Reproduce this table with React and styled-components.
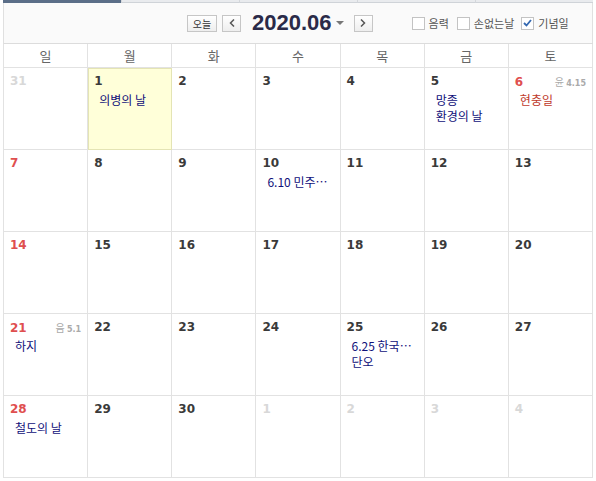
import React from "react";
import styled, { createGlobalStyle } from "styled-components";

const Global = createGlobalStyle`
  html, body {
    margin: 0;
    padding: 0;
    background: #fff;
  }
  body {
    font-family: "Noto Sans CJK KR", "DejaVu Sans", sans-serif;
  }
`;

const Frame = styled.div`
  width: 590px;
  margin: 0 3px;
`;

const Tabs = styled.div`
  display: grid;
  grid-template-columns: repeat(5, 1fr);
  height: 3px;
`;

const Tab = styled.div`
  background: ${p => (p.active ? "#5b6e88" : "#e9ebee")};
  border-bottom: ${p => (p.active ? "none" : "1px solid #cfd3d8")};
  border-left: ${p => (p.active ? "none" : "1px solid #d4d7db")};
`;

const Header = styled.div`
  display: flex;
  align-items: center;
  height: 40px;
  background: #fafafa;
  border-left: 1px solid #e0e0e0;
  border-right: 1px solid #e0e0e0;
  padding-left: 183px;
  box-sizing: border-box;
`;

const Btn = styled.div`
  display: flex;
  align-items: center;
  justify-content: center;
  height: 17px;
  width: ${p => p.w}px;
  box-sizing: border-box;
  border: 1px solid #c6c6c6;
  background: linear-gradient(#ffffff, #eeeeee);
  font-size: 10px;
  color: #333;
  margin-right: ${p => p.mr || 0}px;
`;

const Title = styled.div`
  font-family: "Liberation Sans", Arial, sans-serif;
  font-weight: bold;
  font-size: 22px;
  color: #2a2a48;
  margin: 0 4px 0 11px;
`;

const Caret = styled.div`
  width: 0;
  height: 0;
  border-left: 4px solid transparent;
  border-right: 4px solid transparent;
  border-top: 4px solid #777;
  margin-right: 10px;
`;

const Options = styled.div`
  display: flex;
  align-items: center;
  margin-left: 39px;
`;

const Option = styled.label`
  display: flex;
  align-items: center;
  font-size: 11px;
  color: #555;
  margin-right: ${p => p.mr || 0}px;
`;

const Box = styled.span`
  width: 13px;
  height: 13px;
  box-sizing: border-box;
  border: 1px solid #c3c3c3;
  background: #fff;
  margin-right: 4px;
  display: flex;
  align-items: center;
  justify-content: center;
`;

const Grid = styled.div`
  display: grid;
  grid-template-columns: repeat(7, 1fr);
  border-left: 1px solid #e2e2e2;
  border-top: 1px solid #dcdcdc;
`;

const DayName = styled.div`
  height: 23px;
  display: flex;
  align-items: center;
  justify-content: center;
  font-size: 13px;
  color: #666;
  border-right: 1px solid #e2e2e2;
  border-bottom: 1px solid #e2e2e2;
`;

const Cell = styled.div`
  height: 82px;
  box-sizing: border-box;
  border-right: 1px solid #e2e2e2;
  border-bottom: 1px solid #e2e2e2;
  background: ${p => (p.today ? "#ffffd9" : "#fff")};
  outline: ${p => (p.today ? "1px solid #e4e4b4" : "none")};
  outline-offset: -1px;
  padding: 6px 6px 0;
`;

const Top = styled.div`
  display: flex;
  justify-content: space-between;
  align-items: baseline;
  height: 15px;
`;

const Num = styled.span`
  font-family: "DejaVu Sans", Verdana, sans-serif;
  font-weight: bold;
  font-size: 12px;
  color: ${p => (p.dim ? "#d8d8d8" : p.sun ? "#df4f4f" : "#3a3a3a")};
`;

const Lunar = styled.span`
  font-size: 10px;
  color: #aaa;
  b {
    font-family: "DejaVu Sans", sans-serif;
    font-size: 8px;
  }
`;

const Events = styled.div`
  margin-top: 3px;
  display: flex;
  flex-direction: column;
`;

const Event = styled.div`
  font-size: 12px;
  line-height: 16px;
  height: 16px;
  color: ${p => (p.red ? "#c0392b" : "#10107a")};
  padding-left: 5px;
  white-space: nowrap;
`;

const names = ["일", "월", "화", "수", "목", "금", "토"];

const days = [
  { n: 31, dim: true },
  { n: 1, today: true, ev: ["의병의 날"] },
  { n: 2 },
  { n: 3 },
  { n: 4 },
  { n: 5, ev: ["망종", "환경의 날"] },
  { n: 6, sun: true, lunar: ["윤", "4.15"], ev: ["현충일"], red: true },
  { n: 7, sun: true },
  { n: 8 },
  { n: 9 },
  { n: 10, ev: ["6.10 민주…"] },
  { n: 11 },
  { n: 12 },
  { n: 13 },
  { n: 14, sun: true },
  { n: 15 },
  { n: 16 },
  { n: 17 },
  { n: 18 },
  { n: 19 },
  { n: 20 },
  { n: 21, sun: true, lunar: ["음", "5.1"], ev: ["하지"] },
  { n: 22 },
  { n: 23 },
  { n: 24 },
  { n: 25, ev: ["6.25 한국…", "단오"] },
  { n: 26 },
  { n: 27 },
  { n: 28, sun: true, ev: ["철도의 날"] },
  { n: 29 },
  { n: 30 },
  { n: 1, dim: true },
  { n: 2, dim: true },
  { n: 3, dim: true },
  { n: 4, dim: true },
];

const Check = () => (
  <svg width="9" height="8" viewBox="0 0 9 8">
    <path d="M1 4 L3.5 6.5 L8 1" fill="none" stroke="#3468b0" strokeWidth="1.8" />
  </svg>
);

export default function App() {
  return (
    <Frame>
      <Global />
      <Tabs>
        <Tab active />
        <Tab />
        <Tab />
        <Tab />
        <Tab />
      </Tabs>
      <Header>
        <Btn w={30} mr={5}>오늘</Btn>
        <Btn w={19}>
          <svg width="6" height="8" viewBox="0 0 6 8">
            <path d="M5 0.5 L1.5 4 L5 7.5" fill="none" stroke="#555" strokeWidth="1.5" />
          </svg>
        </Btn>
        <Title>2020.06</Title>
        <Caret />
        <Btn w={19}>
          <svg width="6" height="8" viewBox="0 0 6 8">
            <path d="M1 0.5 L4.5 4 L1 7.5" fill="none" stroke="#555" strokeWidth="1.5" />
          </svg>
        </Btn>
        <Options>
          <Option mr={8}><Box />음력</Option>
          <Option mr={7}><Box />손없는날</Option>
          <Option><Box><Check /></Box>기념일</Option>
        </Options>
      </Header>
      <Grid>
        {names.map(n => (
          <DayName key={n}>{n}</DayName>
        ))}
        {days.map((d, i) => (
          <Cell key={i} today={d.today}>
            <Top>
              <Num dim={d.dim} sun={d.sun}>{d.n}</Num>
              {d.lunar && (
                <Lunar>
                  {d.lunar[0]} <b>{d.lunar[1]}</b>
                </Lunar>
              )}
            </Top>
            {d.ev && (
              <Events>
                {d.ev.map(e => (
                  <Event key={e} red={d.red}>{e}</Event>
                ))}
              </Events>
            )}
          </Cell>
        ))}
      </Grid>
    </Frame>
  );
}
